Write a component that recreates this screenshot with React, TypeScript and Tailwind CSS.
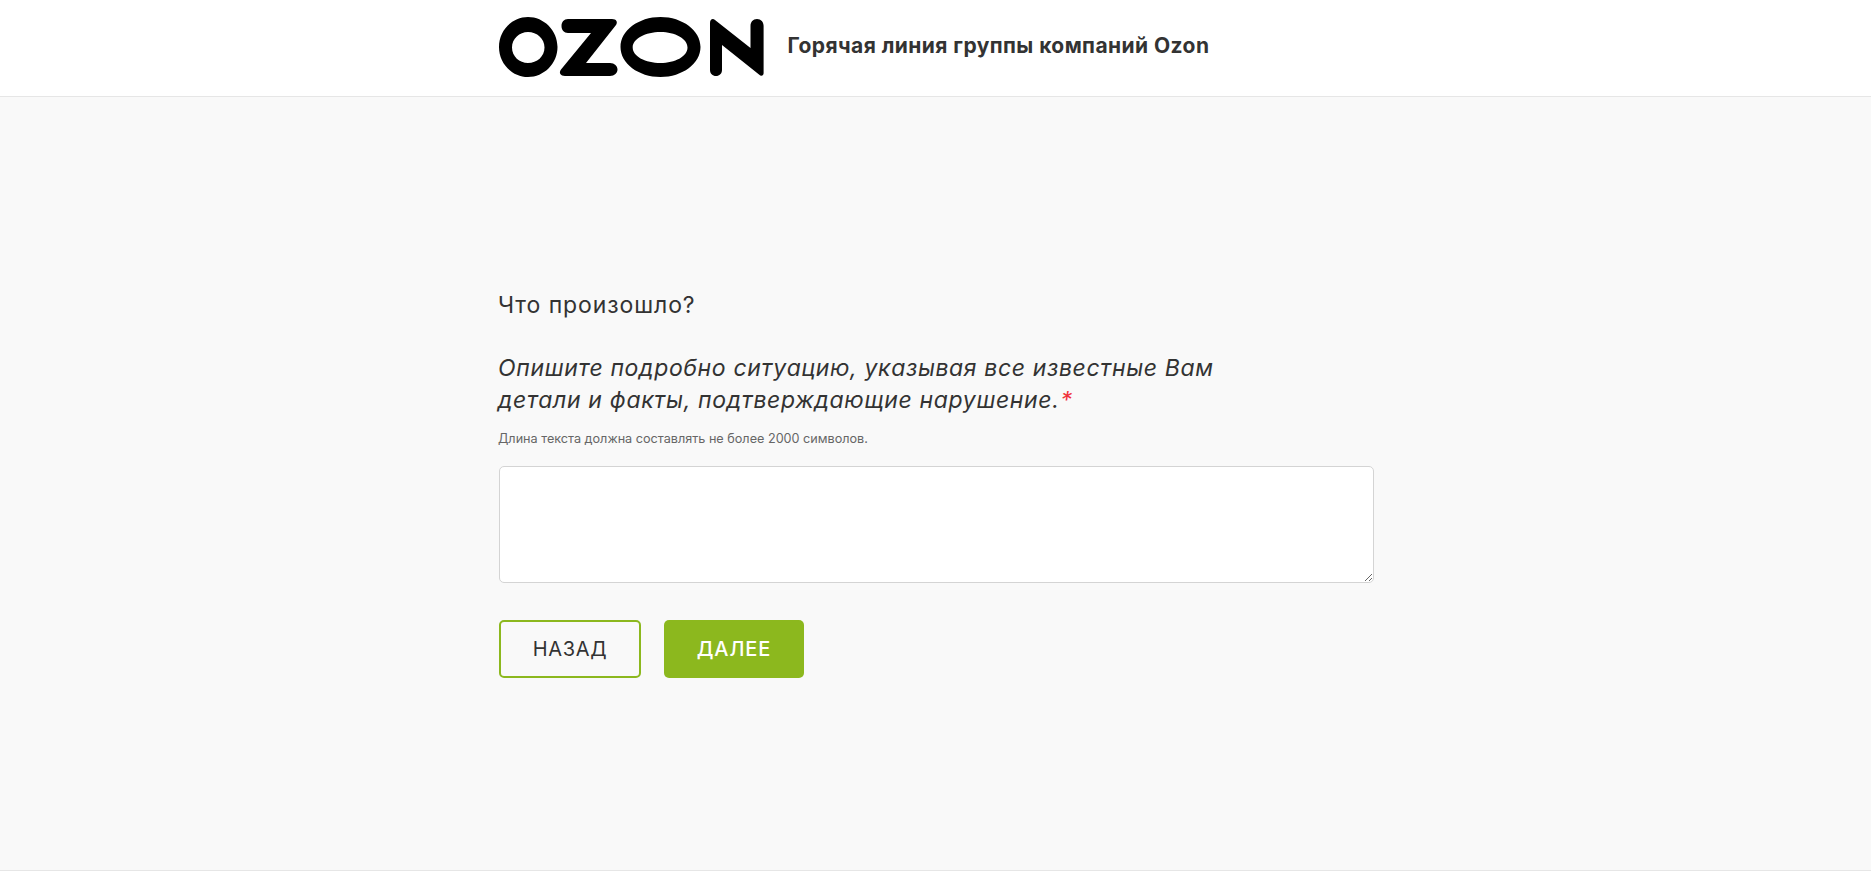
export default function App() {
  return (
    <div className="flex h-[891px] flex-col overflow-hidden bg-[#f9f9f9] font-['Inter','Liberation_Sans',sans-serif] text-[#333]">
      <header className="h-[97px] shrink-0 border-b border-[#e6e6e6] bg-white">
        <div className="mx-auto flex h-full w-[876px] items-center gap-[24px] pb-[3px]">
          <svg width="266" height="62" viewBox="498 16 266 62" className="shrink-0" fill="#000">
            <path fillRule="evenodd" d="M528 17C544 17 557.500 30.500 557.500 47C557.500 63.500 544 77 528 77C512 77 499 63.500 499 47C499 30.500 512 17 528 17ZM528 32C519.500 32 512 38.500 512 47.500C512 56.500 519.500 63 528 63C537 63 544.500 56.500 544.500 47.500C544.500 38.500 537 32 528 32Z" />
            <path d="M568 19H612C616.500 19 618 22 616 25L586 63H610C614.500 63 617.500 66 617.500 69.500C617.500 73 614.500 76 610 76H565C560.500 76 558.500 73 561 69.500L591 33H568C564 33 561.500 30 561.500 26C561.500 22 564 19 568 19Z" />
            <path fillRule="evenodd" d="M660.500 17C682.500 17 700.500 30.500 700.500 47C700.500 63.500 682.500 77 660.500 77C638.500 77 620.500 63.500 620.500 47C620.500 30.500 638.500 17 660.500 17ZM660.500 32C645.500 32 632.700 38.500 632.700 47.500C632.700 56.500 645.500 63 660.500 63C675 63 687.500 56.500 687.500 47.500C687.500 38.500 675 32 660.500 32Z" />
            <path d="M710 23C710 19 713 18 715 20L750.500 48V26C750.500 22 753 19 757 19C761 19 763.600 22 763.600 26V73C763.600 76 761 76.500 759 74.500L722 45V70C722 73.500 719.500 76 716 76C712.500 76 710 73.500 710 70Z" />
          </svg>
          <h1 className="mb-[1px] text-[21px] leading-[28px] font-bold tracking-[0.43px] whitespace-nowrap text-[#333]">
            Горячая линия группы компаний Ozon
          </h1>
        </div>
      </header>
      <main className="flex-1">
        <div className="mx-auto w-[875px] pt-[193px]">
          <p className="text-[23px] leading-[30px] tracking-[0.9px]">Что произошло?</p>
          <p className="mt-[32px] text-[23px] leading-[32px] italic tracking-[0.64px]">
            Опишите подробно ситуацию, указывая все известные Вам
            <br />
            детали и факты, подтверждающие нарушение.
            <span className="ml-[1px] text-[#f0323c]">*</span>
          </p>
          <p className="mt-[14px] text-[12.650px] leading-[18px] text-[#666]">
            Длина текста должна составлять не более 2000 символов.
          </p>
          <textarea className="mt-[18px] ml-[1px] block h-[117px] w-[875px] rounded-[5px] border border-[#d4d4d4] bg-white" />
          <div className="mt-[37px] ml-[1px] flex gap-[23px]">
            <button className="h-[58px] w-[142px] rounded-[5px] border-2 border-[#8cb81e] text-[20px] tracking-[0.7px] text-[#333]">
              НАЗАД
            </button>
            <button className="h-[58px] w-[140px] rounded-[5px] bg-[#8cb81e] text-[20px] font-medium tracking-[0.9px] text-white">
              ДАЛЕЕ
            </button>
          </div>
        </div>
      </main>
      <footer className="h-[21px] shrink-0 border-t border-[#e6e6e6] bg-white" />
    </div>
  );
}
